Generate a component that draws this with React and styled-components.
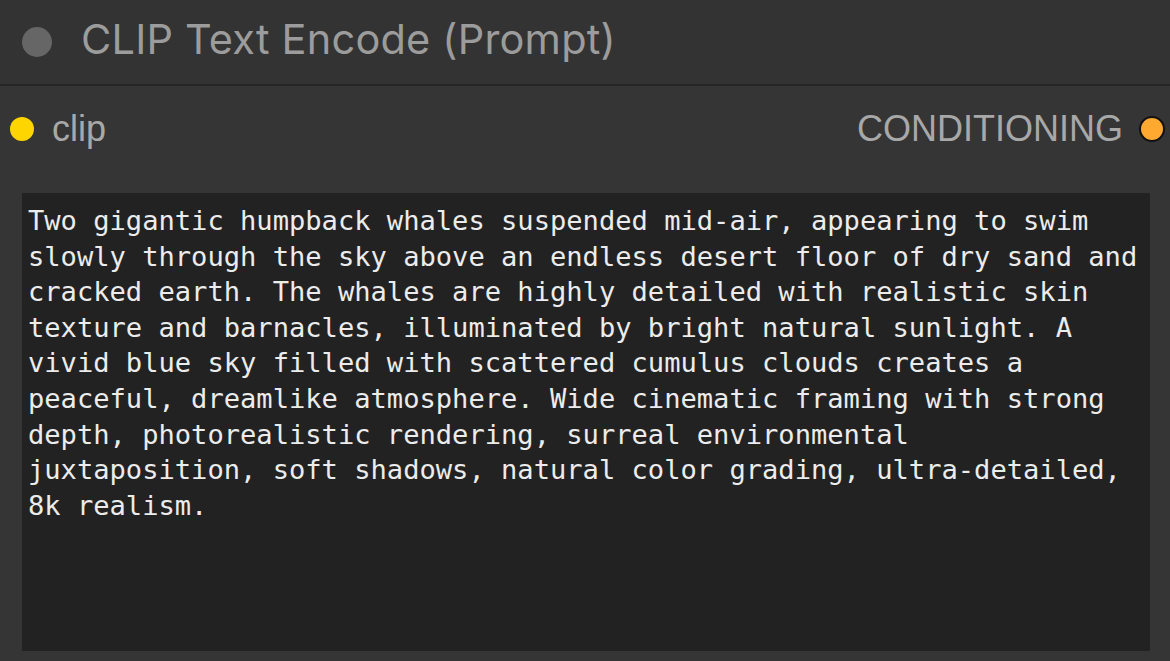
import React from 'react'
import styled, { createGlobalStyle } from 'styled-components'

const Global = createGlobalStyle`
  html, body {
    margin: 0;
    padding: 0;
    background: #353535;
  }
  body {
    width: 1170px;
    height: 661px;
    overflow: hidden;
  }
`

const Node = styled.div`
  width: 1170px;
  height: 661px;
  background: #353535;
  display: flex;
  flex-direction: column;
`

const Header = styled.div`
  height: 86px;
  display: flex;
  align-items: center;
  padding-left: 22px;
  gap: 29px;
  background: #333333;
  border-bottom: 2px solid #262626;
  box-sizing: border-box;
  flex-shrink: 0;
`

const Dot = styled.span`
  width: ${p => p.size}px;
  height: ${p => p.size}px;
  border-radius: 50%;
  background: ${p => p.color};
  border: ${p => (p.ring ? '2px solid #111' : 'none')};
  box-sizing: border-box;
  flex-shrink: 0;
`

const Title = styled.div`
  font-family: Inter, "Liberation Sans", sans-serif;
  font-size: 41.5px;
  color: #9c9c9c;
  letter-spacing: 0.2px;
  margin-top: -6px;
`

const Slots = styled.div`
  display: flex;
  justify-content: space-between;
  align-items: center;
  height: 86px;
  padding: 0 5px 0 10px;
`

const Slot = styled.div`
  display: flex;
  align-items: center;
  gap: ${p => p.gap}px;
  font-family: "Liberation Sans", Arial, sans-serif;
  font-size: 36px;
  color: #a8a8a8;
`

const Prompt = styled.textarea`
  margin: 21px 20px 10px 22px;
  flex: 1;
  background: #222222;
  border: none;
  border-radius: 0;
  outline: none;
  resize: none;
  color: #ececec;
  font-family: "DejaVu Sans Mono", monospace;
  font-size: 27.1px;
  line-height: 35.6px;
  padding: 10px 4px 0 6px;
  overflow: hidden;
`

const promptText =
  'Two gigantic humpback whales suspended mid-air, appearing to swim slowly through the sky above an endless desert floor of dry sand and cracked earth. The whales are highly detailed with realistic skin texture and barnacles, illuminated by bright natural sunlight. A vivid blue sky filled with scattered cumulus clouds creates a peaceful, dreamlike atmosphere. Wide cinematic framing with strong depth, photorealistic rendering, surreal environmental juxtaposition, soft shadows, natural color grading, ultra-detailed, 8k realism.'

export default function App() {
  return (
    <>
      <Global />
      <Node>
        <Header>
          <Dot size={30} color="#666666" />
          <Title>CLIP Text Encode (Prompt)</Title>
        </Header>
        <Slots>
          <Slot gap={18}>
            <Dot size={24} color="#ffd500" />
            clip
          </Slot>
          <Slot gap={16}>
            CONDITIONING
            <Dot size={26} color="#ffa931" ring />
          </Slot>
        </Slots>
        <Prompt readOnly spellCheck={false} defaultValue={promptText} />
      </Node>
    </>
  )
}
